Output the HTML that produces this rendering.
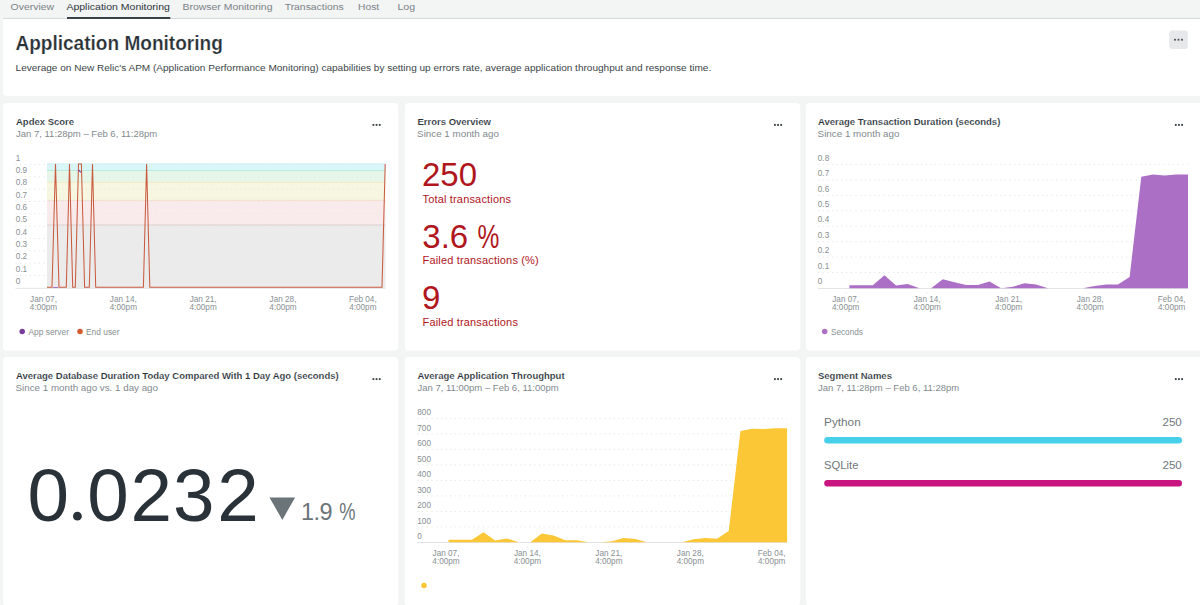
<!DOCTYPE html>
<html><head><meta charset="utf-8"><style>
html,body{margin:0;padding:0;width:1200px;height:605px;overflow:hidden;background:#f3f4f4;}
svg{display:block;font-family:"Liberation Sans", sans-serif;}
</style></head><body>
<svg width="1200" height="605" viewBox="0 0 1200 605">
<text x="10.6" y="10" font-size="9.6" fill="#7b8387" font-weight="normal" text-anchor="start" textLength="43.5" lengthAdjust="spacingAndGlyphs">Overview</text>
<text x="66.4" y="10" font-size="9.6" fill="#2d363b" font-weight="normal" text-anchor="start" textLength="103.5" lengthAdjust="spacingAndGlyphs">Application Monitoring</text>
<text x="182.5" y="10" font-size="9.6" fill="#7b8387" font-weight="normal" text-anchor="start" textLength="90.0" lengthAdjust="spacingAndGlyphs">Browser Monitoring</text>
<text x="284.7" y="10" font-size="9.6" fill="#7b8387" font-weight="normal" text-anchor="start" textLength="59.0" lengthAdjust="spacingAndGlyphs">Transactions</text>
<text x="358.09999999999997" y="10" font-size="9.6" fill="#7b8387" font-weight="normal" text-anchor="start" textLength="21.0" lengthAdjust="spacingAndGlyphs">Host</text>
<text x="397.4" y="10" font-size="9.6" fill="#7b8387" font-weight="normal" text-anchor="start" textLength="17.7" lengthAdjust="spacingAndGlyphs">Log</text>
<rect x="3" y="18" width="1197" height="1" fill="#d5d9db"/>
<rect x="67" y="17" width="103.3" height="2" fill="#3a4448"/>
<path d="M3,19 H1200 V96 H7 Q3,96 3,92 Z" fill="#fff"/>
<text x="15.4" y="49.9" font-size="19.6" fill="#293137" font-weight="bold" text-anchor="start" textLength="207.4" lengthAdjust="spacingAndGlyphs" stroke="#fff" stroke-width="0.2">Application Monitoring</text>
<text x="15.6" y="71.2" font-size="9.6" fill="#3c4549" font-weight="normal" text-anchor="start" textLength="695.6" lengthAdjust="spacingAndGlyphs">Leverage on New Relic's APM (Application Performance Monitoring) capabilities by setting up errors rate, average application throughput and response time.</text>
<rect x="1169.3" y="30.5" width="18.5" height="18.5" rx="3" fill="#e7e8ea"/>
<rect x="1174.1" y="38.8" width="1.8" height="1.8" fill="#4a5256"/>
<rect x="1177.6" y="38.8" width="1.8" height="1.8" fill="#4a5256"/>
<rect x="1181.1" y="38.8" width="1.8" height="1.8" fill="#4a5256"/>
<rect x="3" y="103" width="395.2" height="247.6" rx="4" fill="#fff"/>
<rect x="404.9" y="103" width="395.3" height="247.6" rx="4" fill="#fff"/>
<rect x="806" y="103" width="400" height="247.6" rx="4" fill="#fff"/>
<rect x="3" y="357" width="395.2" height="248.5" rx="4" fill="#fff"/>
<rect x="404.9" y="357" width="395.3" height="248.5" rx="4" fill="#fff"/>
<rect x="806" y="357" width="400" height="248.5" rx="4" fill="#fff"/>
<rect x="372.5" y="123.95" width="1.8" height="1.9" fill="#3a4246"/>
<rect x="375.65" y="123.95" width="1.8" height="1.9" fill="#3a4246"/>
<rect x="378.8" y="123.95" width="1.8" height="1.9" fill="#3a4246"/>
<rect x="372.5" y="378.15000000000003" width="1.8" height="1.9" fill="#3a4246"/>
<rect x="375.65" y="378.15000000000003" width="1.8" height="1.9" fill="#3a4246"/>
<rect x="378.8" y="378.15000000000003" width="1.8" height="1.9" fill="#3a4246"/>
<rect x="774.0" y="123.95" width="1.8" height="1.9" fill="#3a4246"/>
<rect x="777.15" y="123.95" width="1.8" height="1.9" fill="#3a4246"/>
<rect x="780.3" y="123.95" width="1.8" height="1.9" fill="#3a4246"/>
<rect x="774.0" y="378.15000000000003" width="1.8" height="1.9" fill="#3a4246"/>
<rect x="777.15" y="378.15000000000003" width="1.8" height="1.9" fill="#3a4246"/>
<rect x="780.3" y="378.15000000000003" width="1.8" height="1.9" fill="#3a4246"/>
<rect x="1174.8999999999999" y="123.95" width="1.8" height="1.9" fill="#3a4246"/>
<rect x="1178.05" y="123.95" width="1.8" height="1.9" fill="#3a4246"/>
<rect x="1181.1999999999998" y="123.95" width="1.8" height="1.9" fill="#3a4246"/>
<rect x="1174.8999999999999" y="378.15000000000003" width="1.8" height="1.9" fill="#3a4246"/>
<rect x="1178.05" y="378.15000000000003" width="1.8" height="1.9" fill="#3a4246"/>
<rect x="1181.1999999999998" y="378.15000000000003" width="1.8" height="1.9" fill="#3a4246"/>
<text x="16" y="124.7" font-size="9.5" fill="#293137" font-weight="bold" text-anchor="start" stroke="#fff" stroke-width="0.12">Apdex Score</text>
<text x="16" y="136.8" font-size="9.5" fill="#828a8e" font-weight="normal" text-anchor="start" >Jan 7, 11:28pm – Feb 6, 11:28pm</text>
<text x="417.5" y="124.7" font-size="9.5" fill="#293137" font-weight="bold" text-anchor="start" stroke="#fff" stroke-width="0.12">Errors Overview</text>
<text x="417.1" y="136.8" font-size="9.5" fill="#828a8e" font-weight="normal" text-anchor="start" textLength="81.8" lengthAdjust="spacingAndGlyphs">Since 1 month ago</text>
<text x="818" y="124.7" font-size="9.5" fill="#293137" font-weight="bold" text-anchor="start" stroke="#fff" stroke-width="0.12">Average Transaction Duration (seconds)</text>
<text x="817.6" y="136.8" font-size="9.5" fill="#828a8e" font-weight="normal" text-anchor="start" textLength="81.9" lengthAdjust="spacingAndGlyphs">Since 1 month ago</text>
<text x="16" y="378.7" font-size="9.5" fill="#293137" font-weight="bold" text-anchor="start" stroke="#fff" stroke-width="0.12">Average Database Duration Today Compared With 1 Day Ago (seconds)</text>
<text x="15.6" y="390.8" font-size="9.5" fill="#828a8e" font-weight="normal" text-anchor="start" textLength="142.4" lengthAdjust="spacingAndGlyphs">Since 1 month ago vs. 1 day ago</text>
<text x="417.5" y="378.7" font-size="9.5" fill="#293137" font-weight="bold" text-anchor="start" stroke="#fff" stroke-width="0.12">Average Application Throughput</text>
<text x="417.5" y="390.8" font-size="9.5" fill="#828a8e" font-weight="normal" text-anchor="start" >Jan 7, 11:00pm – Feb 6, 11:00pm</text>
<text x="818" y="378.7" font-size="9.5" fill="#293137" font-weight="bold" text-anchor="start" stroke="#fff" stroke-width="0.12">Segment Names</text>
<text x="818" y="390.8" font-size="9.5" fill="#828a8e" font-weight="normal" text-anchor="start" >Jan 7, 11:28pm – Feb 6, 11:28pm</text>
<rect x="47" y="163" width="338.4" height="7.5" fill="#d9f6f8"/>
<rect x="47" y="170.5" width="338.4" height="11.800000000000011" fill="#e6f6e9"/>
<rect x="47" y="182.3" width="338.4" height="18.0" fill="#f7f7e1"/>
<rect x="47" y="200.3" width="338.4" height="24.69999999999999" fill="#f9ebeb"/>
<rect x="47" y="225" width="338.4" height="63.30000000000001" fill="#ebebeb"/>
<rect x="47" y="170" width="338.4" height="0.8" fill="#aee9d8"/>
<rect x="47" y="181.9" width="338.4" height="0.8" fill="#f0e6bf"/>
<rect x="47" y="199.9" width="338.4" height="0.8" fill="#f2d9c6"/>
<rect x="47" y="224.6" width="338.4" height="0.8" fill="#d9c6c6"/>
<line x1="15.5" y1="164.5" x2="385.4" y2="164.5" stroke="#e4e7e8" stroke-width="1" stroke-dasharray="1.3 3.37"/>
<line x1="15.5" y1="176.83" x2="385.4" y2="176.83" stroke="#e4e7e8" stroke-width="1" stroke-dasharray="1.3 3.37"/>
<line x1="15.5" y1="189.16" x2="385.4" y2="189.16" stroke="#e4e7e8" stroke-width="1" stroke-dasharray="1.3 3.37"/>
<line x1="15.5" y1="201.49" x2="385.4" y2="201.49" stroke="#e4e7e8" stroke-width="1" stroke-dasharray="1.3 3.37"/>
<line x1="15.5" y1="213.82" x2="385.4" y2="213.82" stroke="#e4e7e8" stroke-width="1" stroke-dasharray="1.3 3.37"/>
<line x1="15.5" y1="226.15" x2="385.4" y2="226.15" stroke="#e4e7e8" stroke-width="1" stroke-dasharray="1.3 3.37"/>
<line x1="15.5" y1="238.48000000000002" x2="385.4" y2="238.48000000000002" stroke="#e4e7e8" stroke-width="1" stroke-dasharray="1.3 3.37"/>
<line x1="15.5" y1="250.81" x2="385.4" y2="250.81" stroke="#e4e7e8" stroke-width="1" stroke-dasharray="1.3 3.37"/>
<line x1="15.5" y1="263.14" x2="385.4" y2="263.14" stroke="#e4e7e8" stroke-width="1" stroke-dasharray="1.3 3.37"/>
<line x1="15.5" y1="275.47" x2="385.4" y2="275.47" stroke="#e4e7e8" stroke-width="1" stroke-dasharray="1.3 3.37"/>
<rect x="15.5" y="287.8" width="370" height="1" fill="#e2e4e5"/>
<text x="15.7" y="160.5" font-size="8.2" fill="#888f93" font-weight="normal" text-anchor="start" >1</text>
<text x="15.7" y="172.86" font-size="8.2" fill="#888f93" font-weight="normal" text-anchor="start" >0.9</text>
<text x="15.7" y="185.22" font-size="8.2" fill="#888f93" font-weight="normal" text-anchor="start" >0.8</text>
<text x="15.7" y="197.57999999999998" font-size="8.2" fill="#888f93" font-weight="normal" text-anchor="start" >0.7</text>
<text x="15.7" y="209.94" font-size="8.2" fill="#888f93" font-weight="normal" text-anchor="start" >0.6</text>
<text x="15.7" y="222.3" font-size="8.2" fill="#888f93" font-weight="normal" text-anchor="start" >0.5</text>
<text x="15.7" y="234.66" font-size="8.2" fill="#888f93" font-weight="normal" text-anchor="start" >0.4</text>
<text x="15.7" y="247.01999999999998" font-size="8.2" fill="#888f93" font-weight="normal" text-anchor="start" >0.3</text>
<text x="15.7" y="259.38" font-size="8.2" fill="#888f93" font-weight="normal" text-anchor="start" >0.2</text>
<text x="15.7" y="271.74" font-size="8.2" fill="#888f93" font-weight="normal" text-anchor="start" >0.1</text>
<text x="15.7" y="284.1" font-size="8.2" fill="#888f93" font-weight="normal" text-anchor="start" >0</text>
<rect x="43.0" y="292.5" width="1" height="1.2" fill="#e4e6e7"/>
<text x="43.5" y="301.7" font-size="8.2" fill="#888f93" font-weight="normal" text-anchor="middle" >Jan 07,</text>
<text x="43.5" y="309.7" font-size="8.2" fill="#888f93" font-weight="normal" text-anchor="middle" >4:00pm</text>
<rect x="122.8" y="292.5" width="1" height="1.2" fill="#e4e6e7"/>
<text x="123.3" y="301.7" font-size="8.2" fill="#888f93" font-weight="normal" text-anchor="middle" >Jan 14,</text>
<text x="123.3" y="309.7" font-size="8.2" fill="#888f93" font-weight="normal" text-anchor="middle" >4:00pm</text>
<rect x="202.6" y="292.5" width="1" height="1.2" fill="#e4e6e7"/>
<text x="203.1" y="301.7" font-size="8.2" fill="#888f93" font-weight="normal" text-anchor="middle" >Jan 21,</text>
<text x="203.1" y="309.7" font-size="8.2" fill="#888f93" font-weight="normal" text-anchor="middle" >4:00pm</text>
<rect x="282.5" y="292.5" width="1" height="1.2" fill="#e4e6e7"/>
<text x="283" y="301.7" font-size="8.2" fill="#888f93" font-weight="normal" text-anchor="middle" >Jan 28,</text>
<text x="283" y="309.7" font-size="8.2" fill="#888f93" font-weight="normal" text-anchor="middle" >4:00pm</text>
<rect x="362.3" y="292.5" width="1" height="1.2" fill="#e4e6e7"/>
<text x="362.8" y="301.7" font-size="8.2" fill="#888f93" font-weight="normal" text-anchor="middle" >Feb 04,</text>
<text x="362.8" y="309.7" font-size="8.2" fill="#888f93" font-weight="normal" text-anchor="middle" >4:00pm</text>
<path d="M53,287.5 L58,287.5" stroke="#9a6cbc" stroke-width="0.9" fill="none"/>
<path d="M47,287.3 L52,287.3 L55.5,164 L59,287.3 L66.3,287.3 L69.5,164 L72.7,287.3 L75.3,287.3 L78.5,164 L81.4,164 L84.6,287.3 L89.3,287.3 L92.5,164 L95.7,287.3 L143.4,287.3 L146.6,164 L149.8,287.3 L382,287.3 L385.2,164" stroke="#c95c40" stroke-width="1.05" fill="none" stroke-linejoin="miter"/>
<path d="M78.6,170 L80.9,172.3" stroke="#7d3fa5" stroke-width="1.1" fill="none"/>
<circle cx="22.2" cy="331.5" r="2.75" fill="#7a3d9c"/>
<text x="28.5" y="334.5" font-size="8.4" fill="#888f93" font-weight="normal" text-anchor="start" >App server</text>
<circle cx="80" cy="331.5" r="2.75" fill="#d35a2e"/>
<text x="86" y="334.5" font-size="8.4" fill="#888f93" font-weight="normal" text-anchor="start" >End user</text>
<text x="422" y="185.6" font-size="33" fill="#b0161c" font-weight="normal" text-anchor="start" >250</text>
<text x="422.5" y="202.5" font-size="11" fill="#b0161c" font-weight="normal" text-anchor="start" letter-spacing="0.17">Total transactions</text>
<text x="422.3" y="247.5" font-size="33" fill="#b0161c" font-weight="normal" text-anchor="start" >3.6</text>
<text x="477.4" y="247.5" font-size="33" fill="#b0161c" font-weight="normal" text-anchor="start" textLength="21.8" lengthAdjust="spacingAndGlyphs">%</text>
<text x="422.5" y="264" font-size="11" fill="#b0161c" font-weight="normal" text-anchor="start" letter-spacing="0.17">Failed transactions (%)</text>
<text x="422" y="308.8" font-size="33" fill="#b0161c" font-weight="normal" text-anchor="start" >9</text>
<text x="422.5" y="326.3" font-size="11" fill="#b0161c" font-weight="normal" text-anchor="start" letter-spacing="0.17">Failed transactions</text>
<line x1="818" y1="164.4" x2="1188.0" y2="164.4" stroke="#e4e7e8" stroke-width="1" stroke-dasharray="1.3 3.37"/>
<line x1="818" y1="179.85" x2="1188.0" y2="179.85" stroke="#e4e7e8" stroke-width="1" stroke-dasharray="1.3 3.37"/>
<line x1="818" y1="195.3" x2="1188.0" y2="195.3" stroke="#e4e7e8" stroke-width="1" stroke-dasharray="1.3 3.37"/>
<line x1="818" y1="210.75" x2="1188.0" y2="210.75" stroke="#e4e7e8" stroke-width="1" stroke-dasharray="1.3 3.37"/>
<line x1="818" y1="226.2" x2="1188.0" y2="226.2" stroke="#e4e7e8" stroke-width="1" stroke-dasharray="1.3 3.37"/>
<line x1="818" y1="241.65" x2="1188.0" y2="241.65" stroke="#e4e7e8" stroke-width="1" stroke-dasharray="1.3 3.37"/>
<line x1="818" y1="257.1" x2="1188.0" y2="257.1" stroke="#e4e7e8" stroke-width="1" stroke-dasharray="1.3 3.37"/>
<line x1="818" y1="272.55" x2="1188.0" y2="272.55" stroke="#e4e7e8" stroke-width="1" stroke-dasharray="1.3 3.37"/>
<rect x="818" y="288.0" width="370.0" height="1" fill="#e2e4e5"/>
<path d="M849.4,288.3 L849.40,285.30 L861.08,285.30 L872.75,285.30 L884.43,275.30 L896.10,285.60 L907.78,284.00 L919.46,288.30 L931.13,288.30 L942.81,279.30 L954.48,282.20 L966.16,285.00 L977.83,285.00 L989.51,281.60 L1001.19,288.30 L1012.86,286.70 L1024.54,283.30 L1036.21,284.50 L1047.89,288.30 L1059.57,288.30 L1071.24,288.30 L1082.92,288.30 L1094.59,286.00 L1106.27,284.40 L1117.94,284.40 L1129.62,276.90 L1141.30,176.70 L1152.97,174.60 L1164.65,175.50 L1176.32,174.60 L1188.00,174.60 L1188.00,288.3 Z" fill="#ab6fc6"/>
<text x="817.8" y="160.6" font-size="8.2" fill="#888f93" font-weight="normal" text-anchor="start" >0.8</text>
<text x="817.8" y="176.04999999999998" font-size="8.2" fill="#888f93" font-weight="normal" text-anchor="start" >0.7</text>
<text x="817.8" y="191.5" font-size="8.2" fill="#888f93" font-weight="normal" text-anchor="start" >0.6</text>
<text x="817.8" y="206.95" font-size="8.2" fill="#888f93" font-weight="normal" text-anchor="start" >0.5</text>
<text x="817.8" y="222.39999999999998" font-size="8.2" fill="#888f93" font-weight="normal" text-anchor="start" >0.4</text>
<text x="817.8" y="237.85" font-size="8.2" fill="#888f93" font-weight="normal" text-anchor="start" >0.3</text>
<text x="817.8" y="253.29999999999998" font-size="8.2" fill="#888f93" font-weight="normal" text-anchor="start" >0.2</text>
<text x="817.8" y="268.75" font-size="8.2" fill="#888f93" font-weight="normal" text-anchor="start" >0.1</text>
<text x="817.8" y="284.2" font-size="8.2" fill="#888f93" font-weight="normal" text-anchor="start" >0</text>
<rect x="845.2" y="292.5" width="1" height="1.2" fill="#e4e6e7"/>
<text x="845.7" y="301.7" font-size="8.2" fill="#888f93" font-weight="normal" text-anchor="middle" >Jan 07,</text>
<text x="845.7" y="309.7" font-size="8.2" fill="#888f93" font-weight="normal" text-anchor="middle" >4:00pm</text>
<rect x="926.7" y="292.5" width="1" height="1.2" fill="#e4e6e7"/>
<text x="927.2" y="301.7" font-size="8.2" fill="#888f93" font-weight="normal" text-anchor="middle" >Jan 14,</text>
<text x="927.2" y="309.7" font-size="8.2" fill="#888f93" font-weight="normal" text-anchor="middle" >4:00pm</text>
<rect x="1008.2" y="292.5" width="1" height="1.2" fill="#e4e6e7"/>
<text x="1008.7" y="301.7" font-size="8.2" fill="#888f93" font-weight="normal" text-anchor="middle" >Jan 21,</text>
<text x="1008.7" y="309.7" font-size="8.2" fill="#888f93" font-weight="normal" text-anchor="middle" >4:00pm</text>
<rect x="1089.7" y="292.5" width="1" height="1.2" fill="#e4e6e7"/>
<text x="1090.2" y="301.7" font-size="8.2" fill="#888f93" font-weight="normal" text-anchor="middle" >Jan 28,</text>
<text x="1090.2" y="309.7" font-size="8.2" fill="#888f93" font-weight="normal" text-anchor="middle" >4:00pm</text>
<rect x="1171.2" y="292.5" width="1" height="1.2" fill="#e4e6e7"/>
<text x="1171.7" y="301.7" font-size="8.2" fill="#888f93" font-weight="normal" text-anchor="middle" >Feb 04,</text>
<text x="1171.7" y="309.7" font-size="8.2" fill="#888f93" font-weight="normal" text-anchor="middle" >4:00pm</text>
<circle cx="824.7" cy="331.4" r="2.75" fill="#ab6fc6"/>
<text x="831" y="334.6" font-size="8.2" fill="#888f93" font-weight="normal" text-anchor="start" >Seconds</text>
<line x1="417.4" y1="418.4" x2="787.1" y2="418.4" stroke="#e4e7e8" stroke-width="1" stroke-dasharray="1.3 3.37"/>
<line x1="417.4" y1="433.9" x2="787.1" y2="433.9" stroke="#e4e7e8" stroke-width="1" stroke-dasharray="1.3 3.37"/>
<line x1="417.4" y1="449.4" x2="787.1" y2="449.4" stroke="#e4e7e8" stroke-width="1" stroke-dasharray="1.3 3.37"/>
<line x1="417.4" y1="464.9" x2="787.1" y2="464.9" stroke="#e4e7e8" stroke-width="1" stroke-dasharray="1.3 3.37"/>
<line x1="417.4" y1="480.4" x2="787.1" y2="480.4" stroke="#e4e7e8" stroke-width="1" stroke-dasharray="1.3 3.37"/>
<line x1="417.4" y1="495.9" x2="787.1" y2="495.9" stroke="#e4e7e8" stroke-width="1" stroke-dasharray="1.3 3.37"/>
<line x1="417.4" y1="511.4" x2="787.1" y2="511.4" stroke="#e4e7e8" stroke-width="1" stroke-dasharray="1.3 3.37"/>
<line x1="417.4" y1="526.9" x2="787.1" y2="526.9" stroke="#e4e7e8" stroke-width="1" stroke-dasharray="1.3 3.37"/>
<rect x="417.4" y="542.0" width="369.70000000000005" height="1" fill="#e2e4e5"/>
<path d="M448.5,542.3 L448.50,539.70 L460.18,539.70 L471.85,539.70 L483.53,532.20 L495.20,540.50 L506.88,538.40 L518.56,542.30 L530.23,542.30 L541.91,533.40 L553.58,535.50 L565.26,540.20 L576.93,540.20 L588.61,542.30 L600.29,542.30 L611.96,541.20 L623.64,538.00 L635.31,539.10 L646.99,542.30 L658.67,542.30 L670.34,542.30 L682.02,542.30 L693.69,539.30 L705.37,538.00 L717.04,538.80 L728.72,530.90 L740.40,430.90 L752.07,428.80 L763.75,429.00 L775.42,428.20 L787.10,428.20 L787.10,542.3 Z" fill="#fcc737"/>
<text x="417.3" y="415.1" font-size="8.2" fill="#888f93" font-weight="normal" text-anchor="start" >800</text>
<text x="417.3" y="430.6" font-size="8.2" fill="#888f93" font-weight="normal" text-anchor="start" >700</text>
<text x="417.3" y="446.1" font-size="8.2" fill="#888f93" font-weight="normal" text-anchor="start" >600</text>
<text x="417.3" y="461.6" font-size="8.2" fill="#888f93" font-weight="normal" text-anchor="start" >500</text>
<text x="417.3" y="477.1" font-size="8.2" fill="#888f93" font-weight="normal" text-anchor="start" >400</text>
<text x="417.3" y="492.6" font-size="8.2" fill="#888f93" font-weight="normal" text-anchor="start" >300</text>
<text x="417.3" y="508.1" font-size="8.2" fill="#888f93" font-weight="normal" text-anchor="start" >200</text>
<text x="417.3" y="523.6" font-size="8.2" fill="#888f93" font-weight="normal" text-anchor="start" >100</text>
<text x="417.3" y="539.1" font-size="8.2" fill="#888f93" font-weight="normal" text-anchor="start" >0</text>
<rect x="445.5" y="546.4" width="1" height="1.2" fill="#e4e6e7"/>
<text x="446" y="555.6" font-size="8.2" fill="#888f93" font-weight="normal" text-anchor="middle" >Jan 07,</text>
<text x="446" y="563.6" font-size="8.2" fill="#888f93" font-weight="normal" text-anchor="middle" >4:00pm</text>
<rect x="526.9" y="546.4" width="1" height="1.2" fill="#e4e6e7"/>
<text x="527.4" y="555.6" font-size="8.2" fill="#888f93" font-weight="normal" text-anchor="middle" >Jan 14,</text>
<text x="527.4" y="563.6" font-size="8.2" fill="#888f93" font-weight="normal" text-anchor="middle" >4:00pm</text>
<rect x="608.3" y="546.4" width="1" height="1.2" fill="#e4e6e7"/>
<text x="608.8" y="555.6" font-size="8.2" fill="#888f93" font-weight="normal" text-anchor="middle" >Jan 21,</text>
<text x="608.8" y="563.6" font-size="8.2" fill="#888f93" font-weight="normal" text-anchor="middle" >4:00pm</text>
<rect x="689.8" y="546.4" width="1" height="1.2" fill="#e4e6e7"/>
<text x="690.3" y="555.6" font-size="8.2" fill="#888f93" font-weight="normal" text-anchor="middle" >Jan 28,</text>
<text x="690.3" y="563.6" font-size="8.2" fill="#888f93" font-weight="normal" text-anchor="middle" >4:00pm</text>
<rect x="771.2" y="546.4" width="1" height="1.2" fill="#e4e6e7"/>
<text x="771.7" y="555.6" font-size="8.2" fill="#888f93" font-weight="normal" text-anchor="middle" >Feb 04,</text>
<text x="771.7" y="563.6" font-size="8.2" fill="#888f93" font-weight="normal" text-anchor="middle" >4:00pm</text>
<circle cx="424" cy="585.6" r="2.75" fill="#fcc737"/>
<text x="27.4 87.2 130.6 173.0 217.2" y="520.9" font-size="74.6" fill="#293238" font-weight="normal" text-anchor="start" >00232</text>
<circle cx="77.4" cy="516.2" r="4.4" fill="#293238"/>
<path d="M269.5,497.4 L295.1,497.4 L282.3,519.9 Z" fill="#6b7479"/>
<text x="301" y="520.2" font-size="23.5" fill="#6b757a" font-weight="normal" text-anchor="start" letter-spacing="-0.5">1.9</text>
<text x="339.3" y="520.2" font-size="23.5" fill="#6b757a" font-weight="normal" text-anchor="start" textLength="16.3" lengthAdjust="spacingAndGlyphs">%</text>
<text x="824.1" y="426.1" font-size="11.3" fill="#6f777b" font-weight="normal" text-anchor="start" textLength="36.6" lengthAdjust="spacingAndGlyphs">Python</text>
<text x="1181.8" y="426.1" font-size="11.6" fill="#6f777b" font-weight="normal" text-anchor="end" >250</text>
<rect x="824.2" y="437" width="357.8" height="6.4" rx="3.2" fill="#47d0ea"/>
<text x="824.1" y="469.3" font-size="11.3" fill="#6f777b" font-weight="normal" text-anchor="start" textLength="34.3" lengthAdjust="spacingAndGlyphs">SQLite</text>
<text x="1181.8" y="469.3" font-size="11.6" fill="#6f777b" font-weight="normal" text-anchor="end" >250</text>
<rect x="824.2" y="480.1" width="357.8" height="6.4" rx="3.2" fill="#c8157f"/>
</svg>
</body></html>
